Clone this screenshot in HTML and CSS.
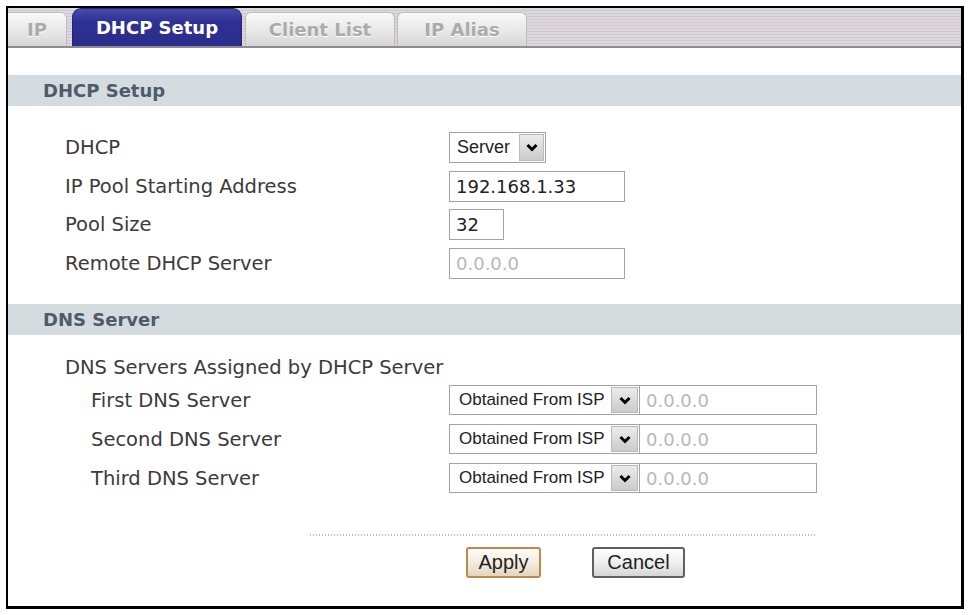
FILE: index.html
```html
<!DOCTYPE html>
<html>
<head>
<meta charset="utf-8">
<title>DHCP Setup</title>
<link rel="stylesheet" href="styles.css">
</head>
<body>
<div class="frame">
  <div class="tabbar">
    <div class="tab tab-ip">IP</div>
    <div class="tab active">DHCP Setup</div>
    <div class="tab tab-client">Client List</div>
    <div class="tab tab-alias">IP Alias</div>
  </div>

  <div class="section-head first">DHCP Setup</div>
  <div class="dhcp-form">
    <div class="label">DHCP</div>
    <div class="select sel-server"><span class="val">Server</span><span class="arrow"><svg viewBox="0 0 12 9" width="12" height="9"><path d="M1.5 2 L6 6.5 L10.5 2" fill="none" stroke="#000" stroke-width="3"/></svg></span></div>

    <div class="label">IP Pool Starting Address</div>
    <div><input class="field w-ip" value="192.168.1.33" readonly></div>

    <div class="label">Pool Size</div>
    <div><input class="field w-size" value="32" readonly></div>

    <div class="label">Remote DHCP Server</div>
    <div><input class="field w-ip off" value="0.0.0.0" readonly></div>
  </div>

  <div class="section-head">DNS Server</div>
  <div class="dns">
    <div class="label dns-title">DNS Servers Assigned by DHCP Server</div>
    <div class="dns-grid">
      <div class="label">First DNS Server</div>
      <div class="pair">
        <div class="select sel-dns"><span class="val">Obtained From ISP</span><span class="arrow"><svg viewBox="0 0 12 9" width="12" height="9"><path d="M1.5 2 L6 6.5 L10.5 2" fill="none" stroke="#000" stroke-width="3"/></svg></span></div>
        <input class="field dns-ip off" value="0.0.0.0" readonly>
      </div>

      <div class="label">Second DNS Server</div>
      <div class="pair">
        <div class="select sel-dns"><span class="val">Obtained From ISP</span><span class="arrow"><svg viewBox="0 0 12 9" width="12" height="9"><path d="M1.5 2 L6 6.5 L10.5 2" fill="none" stroke="#000" stroke-width="3"/></svg></span></div>
        <input class="field dns-ip off" value="0.0.0.0" readonly>
      </div>

      <div class="label">Third DNS Server</div>
      <div class="pair">
        <div class="select sel-dns"><span class="val">Obtained From ISP</span><span class="arrow"><svg viewBox="0 0 12 9" width="12" height="9"><path d="M1.5 2 L6 6.5 L10.5 2" fill="none" stroke="#000" stroke-width="3"/></svg></span></div>
        <input class="field dns-ip off" value="0.0.0.0" readonly>
      </div>
    </div>
  </div>

  <div class="dots"></div>
  <div class="buttons">
    <button class="btn btn-apply">Apply</button>
    <button class="btn btn-cancel">Cancel</button>
  </div>
</div>
</body>
</html>
```

FILE: styles.css
```css
html, body {
  margin: 0;
  background: #ffffff;
}

body {
  font-family: "DejaVu Sans", Verdana, sans-serif;
  color: #3d3a3a;
}

.frame {
  box-sizing: border-box;
  width: 958px;
  height: 603px;
  margin: 6px 0 0 6px;
  border: 2px solid #000;
  border-right-width: 3px;
  border-bottom-width: 3px;
  background: #fff;
}

/* ---------- tabs ---------- */
.tabbar {
  height: 38px;
  border-bottom: 2px solid #8e8a92;
  background: repeating-linear-gradient(to bottom, #ddd8dd 0, #ddd8dd 2px, #cfc9cf 2px, #cfc9cf 3px);
  display: flex;
  align-items: flex-end;
}

.tab {
  box-sizing: border-box;
  height: 34px;
  line-height: 33px;
  text-align: center;
  font-size: 18px;
  font-weight: bold;
  color: #ababab;
  background: linear-gradient(#f8f8f8, #e6e6e6 60%, #d6d6d6);
  border: 1px solid #bdbdbd;
  border-bottom: none;
  border-radius: 6px 6px 0 0;
  text-shadow: 0 1px 0 #ffffff;
}

.tab-ip {
  width: 59px;
  margin-right: 5px;
  border-left: none;
  border-radius: 0 6px 0 0;
}

.tab.active {
  width: 170px;
  height: 38px;
  line-height: 37px;
  margin-right: 3px;
  color: #ffffff;
  background: linear-gradient(#4649ad, #2e3192 35%, #2a2d8b);
  border-color: #22257a;
  border-radius: 9px 9px 0 0;
  text-shadow: none;
}

.tab-client {
  width: 150px;
  margin-right: 2px;
}

.tab-alias {
  width: 130px;
}

/* ---------- section headers ---------- */
.section-head {
  height: 31px;
  line-height: 31px;
  padding-left: 35px;
  background: #d5dcdf;
  color: #4f5a6a;
  font-size: 18px;
  font-weight: bold;
}

.section-head.first {
  margin-top: 27px;
}

.label {
  font-size: 19.5px;
  color: #3d3a3a;
  white-space: nowrap;
}

/* ---------- DHCP form ---------- */
.dhcp-form {
  padding: 26px 0 25px 57px;
  display: grid;
  grid-template-columns: 384px auto;
  grid-auto-rows: 31px;
  row-gap: 7.5px;
  align-items: center;
}

.field {
  box-sizing: border-box;
  display: block;
  height: 31px;
  margin: 0;
  padding: 0 0 0 6px;
  border: 1px solid #a3a3a3;
  background: #ffffff;
  font-family: "DejaVu Sans", Verdana, sans-serif;
  font-size: 18px;
  color: #222222;
  outline: none;
}

.field.off {
  color: #b8b8b8;
}

.w-ip {
  width: 176px;
}

.w-size {
  width: 55px;
}

.select {
  box-sizing: border-box;
  display: flex;
  height: 31px;
  border: 1px solid #a3a3a3;
  background: #ffffff;
  font-family: "Liberation Sans", Arial, sans-serif;
  color: #222222;
}

.select .val {
  flex: 1;
  padding-left: 7px;
  line-height: 29px;
  white-space: nowrap;
}

.select .arrow {
  box-sizing: border-box;
  width: 25px;
  margin: 1px;
  border: 1px solid #b9b9b9;
  background: linear-gradient(#ebebeb, #cbcbcb);
  display: flex;
  align-items: center;
  justify-content: center;
}

.sel-server {
  width: 97px;
  font-size: 18px;
}

/* ---------- DNS ---------- */
.dns {
  padding: 21.5px 0 0 57px;
}

.dns-title {
  line-height: 24px;
  margin-bottom: 5px;
}

.dns-grid {
  display: grid;
  grid-template-columns: 358px auto;
  grid-auto-rows: 30px;
  row-gap: 9px;
  padding-left: 26px;
  align-items: center;
}

.pair {
  display: flex;
  height: 30px;
}

.sel-dns {
  width: 191px;
  height: 30px;
  font-size: 17px;
}

.sel-dns .arrow {
  width: 27px;
}

.sel-dns .val {
  line-height: 28px;
  padding-left: 9px;
}

.dns-ip {
  width: 177px;
  height: 30px;
  border-left: none;
}

/* ---------- footer ---------- */
.dots {
  margin: 41px 0 0 302px;
  width: 507px;
  height: 2px;
  background-image:
    repeating-linear-gradient(to right, #b7bec8 0, #b7bec8 1px, transparent 1px, transparent 3px);
}

.buttons {
  margin: 11px 0 0 458px;
  display: flex;
  gap: 51px;
}

.btn {
  box-sizing: border-box;
  height: 31px;
  padding: 0;
  font-family: "Liberation Sans", Arial, sans-serif;
  font-size: 20px;
  color: #222222;
  border-radius: 3px;
}

.btn-apply {
  width: 75px;
  border: 2px solid #c1884a;
  background: linear-gradient(#fffdf8, #f3ece0 50%, #e2d6c1);
}

.btn-cancel {
  width: 93px;
  border: 2px solid #606060;
  background: linear-gradient(#ffffff, #efefef 50%, #d6d6d6);
}
```
